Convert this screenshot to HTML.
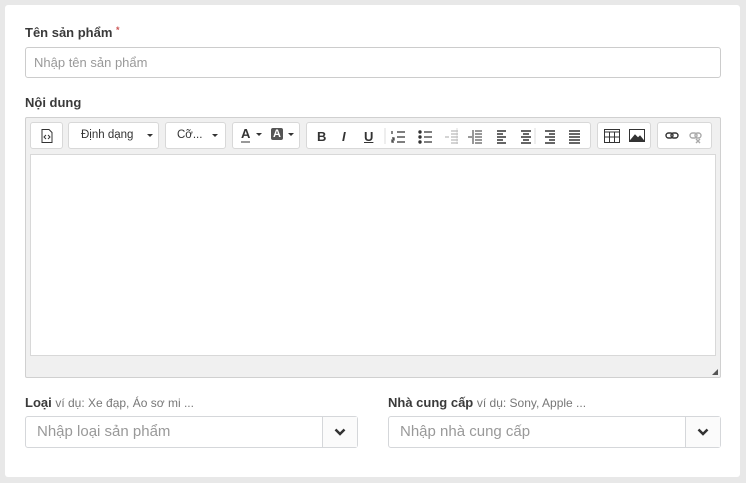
<!DOCTYPE html>
<html><head><meta charset="utf-8"><style>
body{margin:0;width:746px;height:483px;background:#e8e8e8;font-family:"Liberation Sans",Arial,sans-serif;position:relative;overflow:hidden}
.card{position:absolute;left:5px;top:5px;width:735px;height:472px;background:#fff;border-radius:3px}
.lbl{position:absolute;font-size:13px;font-weight:bold;color:#3a3a3a}
.inp{position:absolute;border:1px solid #ccc;border-radius:3px;background:#fff;box-sizing:border-box;color:#999;font-size:13px}
.ed{position:absolute;left:25px;top:117px;width:696px;height:261px;background:#f0f0f0;border:1px solid #d0d0d0;box-sizing:border-box;border-radius:2px}
.g{position:absolute;top:4px;height:27px;background:#fff;border:1px solid #d8d8d8;border-radius:3px;box-sizing:border-box;font-size:11.5px;color:#333}
.area{position:absolute;left:4px;top:36px;width:686px;height:202px;background:#fff;border:1px solid #d8d8d8;box-sizing:border-box}
.ic{position:absolute;top:7px}
.ar{position:absolute;top:11px;width:0;height:0;border-left:3px solid transparent;border-right:3px solid transparent;border-top:3px solid #333}
.sel{position:absolute;top:416px;height:32px;border:1px solid #d5d7da;border-radius:3px;box-sizing:border-box;font-size:15px;color:#999}
.sel .b{position:absolute;right:0;top:0;width:34px;height:30px;border-left:1px solid #d5d7da;background:#fbfbfb}
.hint{font-weight:normal;color:#777;font-size:12px}
</style></head><body>
<div class="card"></div>
<div class="lbl" style="left:25px;top:25px">Tên sản phẩm <span style="color:#c55;font-size:9px;vertical-align:top">*</span></div>
<div class="inp" style="left:25px;top:47px;width:696px;height:31px;padding:7px 8px">Nhập tên sản phẩm</div>
<div class="lbl" style="left:25px;top:95px">Nội dung</div>
<div class="ed">
 <div class="g" style="left:4px;width:33px"><svg class="ic" style="left:10px;top:6px" width="12" height="14"><path d="M1 .5h7l3 3v10H1z" fill="none" stroke="#333"/><path d="M5 6l-2 2 2 2M7 6l2 2-2 2" fill="none" stroke="#333"/></svg></div>
 <div class="g" style="left:42px;width:91px"><span style="position:absolute;left:12px;top:6px">Định dạng</span><span class="ar" style="left:78px"></span></div>
 <div class="g" style="left:139px;width:61px"><span style="position:absolute;left:11px;top:6px">Cỡ...</span><span class="ar" style="left:46px"></span></div>
 <div class="g" style="left:206px;width:68px">
  <span style="position:absolute;left:8px;top:3px;font-weight:bold;font-size:13px;border-bottom:2px solid #999;line-height:15px">A</span><span class="ar" style="left:23px;top:10px"></span>
  <span style="position:absolute;left:38px;top:5px;background:#555;color:#fff;font-weight:bold;font-size:11px;padding:0 2px;border-radius:2px">A</span><span class="ar" style="left:55px;top:10px"></span></div>
 <div class="g" style="left:280px;width:285px;font-size:13px">
  <b style="position:absolute;left:10px;top:6px">B</b><i style="position:absolute;left:35px;top:6px;font-weight:bold">I</i><u style="position:absolute;left:57px;top:6px;font-weight:bold">U</u>
  <svg style="position:absolute;left:0;top:0" width="285" height="27" stroke="#333" fill="none">
   <path d="M78 5v16M150 5v16M228 5v16" stroke="#ddd"/>
   <path d="M90 9h8M90 14h8M90 19h8M85 8v3M85 15h2v2h-2v2h2" stroke-width="1.2"/>
   <path d="M117 9h8M117 14h8M117 19h8" stroke-width="1.2"/><circle cx="113" cy="9" r="1.2" fill="#333"/><circle cx="113" cy="14" r="1.2" fill="#333"/><circle cx="113" cy="19" r="1.2" fill="#333"/>
   <path d="M144 8h7M144 11h7M144 14h7M144 17h7M144 20h7M138 14h4" stroke="#aaa"/>
   <path d="M168 8h7M168 11h7M168 14h7M168 17h7M168 20h7M161 14h4M166 7v14" stroke-width="1"/>
   <path d="M190 8h9M190 11h6M190 14h9M190 17h6M190 20h9" stroke-width="1.5"/>
   <path d="M214 8h10M216 11h6M214 14h10M216 17h6M214 20h10" stroke-width="1.5"/>
   <path d="M238 8h10M242 11h6M238 14h10M242 17h6M238 20h10" stroke-width="1.5"/>
   <path d="M262 8h11M262 11h11M262 14h11M262 17h11M262 20h11" stroke-width="1.5"/>
  </svg></div>
 <div class="g" style="left:571px;width:54px"><svg style="position:absolute;left:0;top:0" width="54" height="27" fill="none" stroke="#333"><rect x="6.5" y="6.5" width="15" height="13"/><path d="M6 9h16M6 14h16M11.5 9v11M16.5 9v11"/><rect x="31.5" y="6.5" width="15" height="12"/><path d="M32 18l5-6 3 3 2-2 4 5z" fill="#333"/></svg></div>
 <div class="g" style="left:631px;width:55px"><svg style="position:absolute;left:0;top:0" width="55" height="27" fill="none" stroke="#333" stroke-width="1.4"><rect x="8" y="10" width="7" height="5" rx="2.5"/><rect x="13" y="10" width="7" height="5" rx="2.5"/><g stroke="#aaa"><rect x="32" y="10" width="7" height="5" rx="2.5"/><rect x="37" y="10" width="6" height="5" rx="2.5"/><path d="M38 16l4 4M42 16l-4 4"/></g></svg></div>
 <div class="area"></div>
 <svg style="position:absolute;right:2px;bottom:2px" width="6" height="6"><path d="M6 0v6H0z" fill="#555"/></svg>
</div>
<div class="lbl" style="left:25px;top:395px">Loại <span class="hint">ví dụ: Xe đạp, Áo sơ mi ...</span></div>
<div class="sel" style="left:25px;width:333px"><span style="position:absolute;left:11px;top:6px">Nhập loại sản phẩm</span><div class="b"><svg style="position:absolute;left:11px;top:11px" width="12" height="8"><path d="M1.5 1.5l4.5 4.5 4.5-4.5" fill="none" stroke="#333" stroke-width="2.5"/></svg></div></div>
<div class="lbl" style="left:388px;top:395px">Nhà cung cấp <span class="hint">ví dụ: Sony, Apple ...</span></div>
<div class="sel" style="left:388px;width:333px"><span style="position:absolute;left:11px;top:6px">Nhập nhà cung cấp</span><div class="b"><svg style="position:absolute;left:11px;top:11px" width="12" height="8"><path d="M1.5 1.5l4.5 4.5 4.5-4.5" fill="none" stroke="#333" stroke-width="2.5"/></svg></div></div>
</body></html>
